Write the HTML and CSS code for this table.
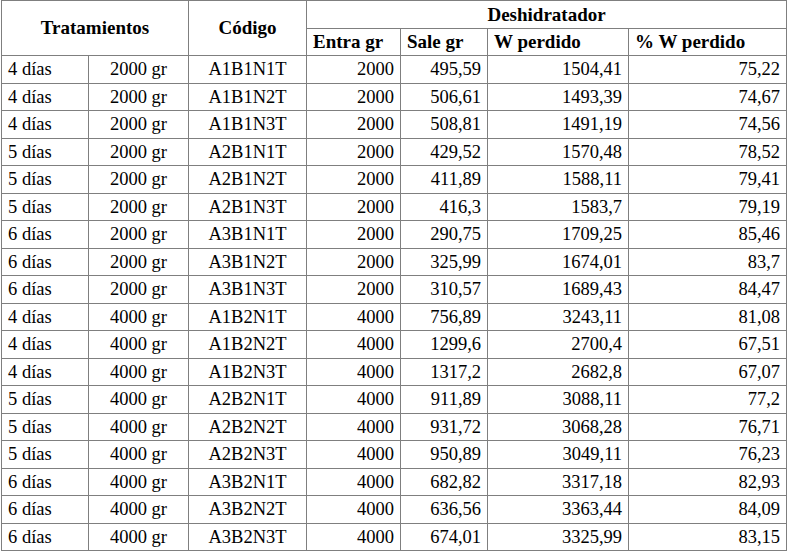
FILE: index.html
```html
<!DOCTYPE html>
<html lang="es">
<head>
<meta charset="utf-8">
<title>Deshidratador</title>
<link rel="stylesheet" href="styles.css">
</head>
<body>
<div class="wrap">
<table class="data">
<colgroup>
<col class="c1"><col class="c2"><col class="c3"><col class="c4"><col class="c5"><col class="c6"><col class="c7">
</colgroup>
<thead>
<tr class="h1">
<th colspan="2" rowspan="2" class="center">Tratamientos</th>
<th rowspan="2" class="center">Código</th>
<th colspan="4" class="center">Deshidratador</th>
</tr>
<tr class="h2">
<th>Entra gr</th><th>Sale gr</th><th>W perdido</th><th>% W perdido</th>
</tr>
</thead>
<tbody>
<tr><td>4 días</td><td class="mid">2000 gr</td><td class="mid">A1B1N1T</td><td class="num">2000</td><td class="num">495,59</td><td class="num">1504,41</td><td class="num">75,22</td></tr>
<tr><td>4 días</td><td class="mid">2000 gr</td><td class="mid">A1B1N2T</td><td class="num">2000</td><td class="num">506,61</td><td class="num">1493,39</td><td class="num">74,67</td></tr>
<tr><td>4 días</td><td class="mid">2000 gr</td><td class="mid">A1B1N3T</td><td class="num">2000</td><td class="num">508,81</td><td class="num">1491,19</td><td class="num">74,56</td></tr>
<tr><td>5 días</td><td class="mid">2000 gr</td><td class="mid">A2B1N1T</td><td class="num">2000</td><td class="num">429,52</td><td class="num">1570,48</td><td class="num">78,52</td></tr>
<tr><td>5 días</td><td class="mid">2000 gr</td><td class="mid">A2B1N2T</td><td class="num">2000</td><td class="num">411,89</td><td class="num">1588,11</td><td class="num">79,41</td></tr>
<tr><td>5 días</td><td class="mid">2000 gr</td><td class="mid">A2B1N3T</td><td class="num">2000</td><td class="num">416,3</td><td class="num">1583,7</td><td class="num">79,19</td></tr>
<tr><td>6 días</td><td class="mid">2000 gr</td><td class="mid">A3B1N1T</td><td class="num">2000</td><td class="num">290,75</td><td class="num">1709,25</td><td class="num">85,46</td></tr>
<tr><td>6 días</td><td class="mid">2000 gr</td><td class="mid">A3B1N2T</td><td class="num">2000</td><td class="num">325,99</td><td class="num">1674,01</td><td class="num">83,7</td></tr>
<tr><td>6 días</td><td class="mid">2000 gr</td><td class="mid">A3B1N3T</td><td class="num">2000</td><td class="num">310,57</td><td class="num">1689,43</td><td class="num">84,47</td></tr>
<tr><td>4 días</td><td class="mid">4000 gr</td><td class="mid">A1B2N1T</td><td class="num">4000</td><td class="num">756,89</td><td class="num">3243,11</td><td class="num">81,08</td></tr>
<tr><td>4 días</td><td class="mid">4000 gr</td><td class="mid">A1B2N2T</td><td class="num">4000</td><td class="num">1299,6</td><td class="num">2700,4</td><td class="num">67,51</td></tr>
<tr><td>4 días</td><td class="mid">4000 gr</td><td class="mid">A1B2N3T</td><td class="num">4000</td><td class="num">1317,2</td><td class="num">2682,8</td><td class="num">67,07</td></tr>
<tr><td>5 días</td><td class="mid">4000 gr</td><td class="mid">A2B2N1T</td><td class="num">4000</td><td class="num">911,89</td><td class="num">3088,11</td><td class="num">77,2</td></tr>
<tr><td>5 días</td><td class="mid">4000 gr</td><td class="mid">A2B2N2T</td><td class="num">4000</td><td class="num">931,72</td><td class="num">3068,28</td><td class="num">76,71</td></tr>
<tr><td>5 días</td><td class="mid">4000 gr</td><td class="mid">A2B2N3T</td><td class="num">4000</td><td class="num">950,89</td><td class="num">3049,11</td><td class="num">76,23</td></tr>
<tr><td>6 días</td><td class="mid">4000 gr</td><td class="mid">A3B2N1T</td><td class="num">4000</td><td class="num">682,82</td><td class="num">3317,18</td><td class="num">82,93</td></tr>
<tr><td>6 días</td><td class="mid">4000 gr</td><td class="mid">A3B2N2T</td><td class="num">4000</td><td class="num">636,56</td><td class="num">3363,44</td><td class="num">84,09</td></tr>
<tr><td>6 días</td><td class="mid">4000 gr</td><td class="mid">A3B2N3T</td><td class="num">4000</td><td class="num">674,01</td><td class="num">3325,99</td><td class="num">83,15</td></tr>
</tbody>
</table>
</div>
</body>
</html>
```
FILE: styles.css
```css
html, body {
  margin: 0;
  padding: 0;
  background: #ffffff;
}
.wrap {
  padding: 0 0 0 1px;
}
.data {
  border-collapse: collapse;
  table-layout: fixed;
  width: 786px;
  font-family: "Liberation Serif", "Times New Roman", serif;
  font-size: 18.5px;
  color: #000000;
}
.c1 { width: 87px; }
.c2 { width: 100px; }
.c3 { width: 118px; }
.c4 { width: 94px; }
.c5 { width: 87px; }
.c6 { width: 141px; }
.c7 { width: 158px; }
.data th, .data td {
  border: 1.5px solid #7f7f7f;
  padding: 0 6px;
  vertical-align: middle;
  line-height: 20px;
  white-space: nowrap;
}
.data th {
  font-size: 19px;
  font-weight: bold;
  text-align: left;
}
.data th.center { text-align: center; }
.h1 { height: 28px; }
.h2 { height: 27px; }
.data tbody tr { height: 27.5px; }
.data td { text-align: left; }
.data td.mid { text-align: center; }
.data td.num { text-align: right; }
```
